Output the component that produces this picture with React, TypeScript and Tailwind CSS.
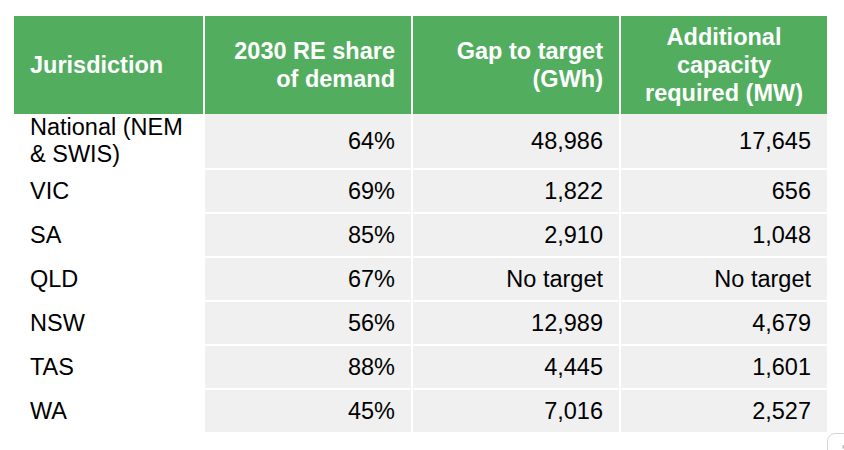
import React from "react";

type Row = {
  name: React.ReactNode;
  share: string;
  gap: string;
  capacity: string;
  tall?: boolean;
};

const rows: Row[] = [
  {
    name: (
      <>
        National (NEM
        <br />& SWIS)
      </>
    ),
    share: "64%",
    gap: "48,986",
    capacity: "17,645",
    tall: true,
  },
  { name: "VIC", share: "69%", gap: "1,822", capacity: "656" },
  { name: "SA", share: "85%", gap: "2,910", capacity: "1,048" },
  { name: "QLD", share: "67%", gap: "No target", capacity: "No target" },
  { name: "NSW", share: "56%", gap: "12,989", capacity: "4,679" },
  { name: "TAS", share: "88%", gap: "4,445", capacity: "1,601" },
  { name: "WA", share: "45%", gap: "7,016", capacity: "2,527" },
];

const grid = "grid grid-cols-[189px_206px_206px_206px] gap-x-[2px]";

const App: React.FC = () => {
  return (
    <div
      className="relative h-[450px] w-[844px] overflow-hidden bg-white"
      style={{ fontFamily: '"Liberation Sans", Arial, sans-serif' }}
    >
      <div className="ml-[14px] pt-[16px]">
        {/* header */}
        <div className={`${grid} h-[98px] text-[23.5px] font-bold leading-[28px] text-white`}>
          <div className="flex items-center bg-[#52ad5f] pl-4">Jurisdiction</div>
          <div className="flex items-center justify-end bg-[#52ad5f] pr-4 text-right">
            <span>
              2030 RE share
              <br />
              of demand
            </span>
          </div>
          <div className="flex items-center justify-end bg-[#52ad5f] pr-4 text-right">
            <span>
              Gap to target
              <br />
              (GWh)
            </span>
          </div>
          <div className="flex items-center justify-center bg-[#52ad5f] px-4 text-center">
            <span>
              Additional
              <br />
              capacity
              <br />
              required (MW)
            </span>
          </div>
        </div>

        {/* body */}
        <div className="flex flex-col gap-y-[2px] text-[23.5px] leading-[27px] text-black">
          {rows.map((row, i) => (
            <div key={i} className={`${grid} ${row.tall ? "h-[54px]" : "h-[42px]"}`}>
              <div className="flex items-center pl-4">
                <span>{row.name}</span>
              </div>
              <div className="flex items-center justify-end bg-[#f0f0f0] pr-4">{row.share}</div>
              <div className="flex items-center justify-end bg-[#f0f0f0] pr-4">{row.gap}</div>
              <div className="flex items-center justify-end bg-[#f0f0f0] pr-4">{row.capacity}</div>
            </div>
          ))}
        </div>
      </div>

      {/* cut-off control in the corner */}
      <div className="absolute left-[827px] top-[433px] h-[30px] w-[40px] rounded-[8px] border border-[#d4d4d4] bg-white">
        <div className="absolute left-[14px] top-[11px] h-[4px] w-[4px] rounded-full bg-[#c8c8c8]" />
      </div>
    </div>
  );
};

export default App;
